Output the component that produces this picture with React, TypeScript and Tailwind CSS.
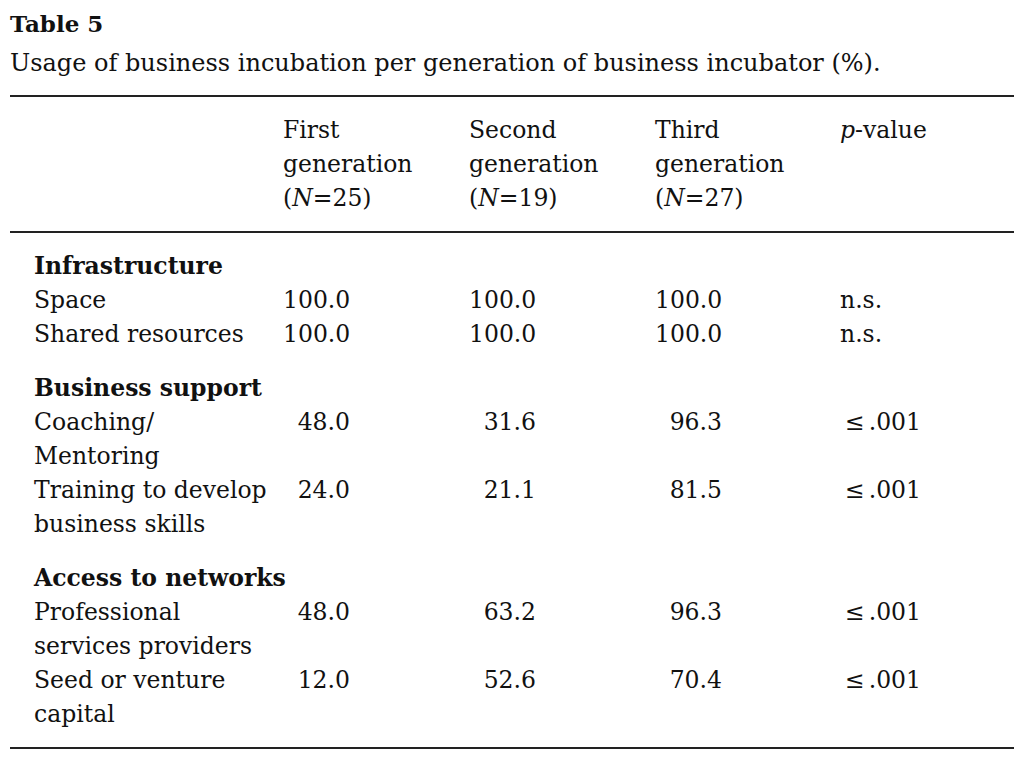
const groups = [
  {
    title: 'Infrastructure',
    rows: [
      { label: ['Space'], v: ['100.0', '100.0', '100.0'], p: 'n.s.' },
      { label: ['Shared resources'], v: ['100.0', '100.0', '100.0'], p: 'n.s.' },
    ],
  },
  {
    title: 'Business support',
    rows: [
      { label: ['Coaching/', 'Mentoring'], v: ['48.0', '31.6', '96.3'], p: '≤' },
      { label: ['Training to develop', 'business skills'], v: ['24.0', '21.1', '81.5'], p: '≤' },
    ],
  },
  {
    title: 'Access to networks',
    rows: [
      { label: ['Professional', 'services providers'], v: ['48.0', '63.2', '96.3'], p: '≤' },
      { label: ['Seed or venture', 'capital'], v: ['12.0', '52.6', '70.4'], p: '≤' },
    ],
  },
];

const heads = [
  { a: 'First', n: '25' },
  { a: 'Second', n: '19' },
  { a: 'Third', n: '27' },
];

const cols = 'grid grid-cols-[249px_186px_186px_185px_1fr]';

export default function App() {
  return (
    <div
      className="w-[1024px] h-[764px] bg-white text-[#111] px-[10px] pt-[7px]"
      style={{ fontFamily: '"DejaVu Serif", serif' }}
    >
      <div className="text-[23px] leading-[34px] font-bold">Table 5</div>
      <div className="text-[24px] leading-[34px] mt-[5px]">
        Usage of business incubation per generation of business incubator (%).
      </div>

      <div className="mt-[15px] border-t-2 border-[#222]" />

      {/* header */}
      <div className={`${cols} pl-[24px] pt-[16px] pb-[16px] text-[23.5px] leading-[34px]`}>
        <div />
        {heads.map((h) => (
          <div key={h.a}>
            <div>{h.a}</div>
            <div>generation</div>
            <div>
              (<span className="italic">N</span>={h.n})
            </div>
          </div>
        ))}
        <div>
          <span className="italic">p</span>-value
        </div>
      </div>

      <div className="border-t-2 border-[#222]" />

      {/* body */}
      <div className="pl-[24px] pt-[16px] pb-[16px] text-[23.5px] leading-[34px] flex flex-col gap-[20px]">
        {groups.map((g) => (
          <div key={g.title}>
            <div className="font-bold">{g.title}</div>
            {g.rows.map((r) => (
              <div key={r.label[0]} className={cols}>
                <div>
                  {r.label.map((l) => (
                    <div key={l}>{l}</div>
                  ))}
                </div>
                {r.v.map((v, i) => (
                  <div key={i}>
                    <span className="inline-block w-[67px] text-right">{v}</span>
                  </div>
                ))}
                <div>
                  {r.p === 'n.s.' ? (
                    'n.s.'
                  ) : (
                    <span className="pl-[5px]">
                      ≤<span className="ml-[4px]">.001</span>
                    </span>
                  )}
                </div>
              </div>
            ))}
          </div>
        ))}
      </div>

      <div className="border-t-2 border-[#222]" />
    </div>
  );
}
